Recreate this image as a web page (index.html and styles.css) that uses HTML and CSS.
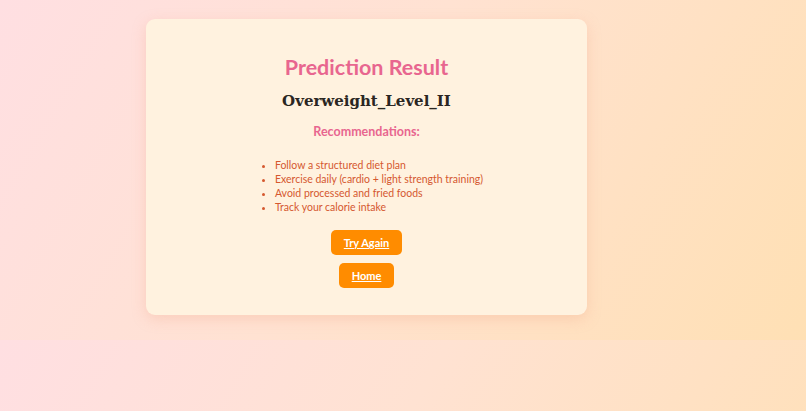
FILE: index.html
```html
<!DOCTYPE html>
<html>
<head>
<meta charset="utf-8">
<link rel="stylesheet" href="styles.css">
</head>
<body>
<div class="card">
  <h1 class="title">Prediction Result</h1>
  <h2 class="result">Overweight_Level_II</h2>
  <h3 class="rec-title">Recommendations:</h3>
  <ul class="rec-list">
    <li>Follow a structured diet plan</li>
    <li>Exercise daily (cardio + light strength training)</li>
    <li>Avoid processed and fried foods</li>
    <li>Track your calorie intake</li>
  </ul>
  <div class="actions">
    <a class="btn" href="#">Try Again</a>
    <a class="btn" href="#">Home</a>
  </div>
</div>
</body>
</html>
```
FILE: styles.css
```css
html {
  margin: 0;
  background: linear-gradient(120deg, #ffdfe2 0%, #ffe2d2 45%, #ffe0b4 100%);
  background-size: 100% 340px;
  background-repeat: repeat-y;
}
body {
  margin: 0;
  padding: 19px 0 26px 146px;
  font-family: Lato, "Noto Sans", sans-serif;
}
.card {
  width: 441px;
  box-sizing: border-box;
  background: #fff2df;
  border-radius: 9px;
  box-shadow: 0 4px 14px rgba(240, 170, 140, 0.35);
  padding: 33px 20px 27px;
  text-align: center;
}
.title {
  margin: 0;
  font-size: 21.5px;
  line-height: 30px;
  font-weight: 700;
  color: #e8668f;
}
.result {
  margin: 7px 0 0;
  font-family: "DejaVu Serif", Georgia, serif;
  font-size: 15px;
  line-height: 24px;
  font-weight: 700;
  color: #2a2622;
}
.rec-title {
  margin: 10px 0 0;
  font-size: 12.5px;
  line-height: 18px;
  font-weight: 700;
  color: #e8668f;
}
.rec-list {
  display: inline-block;
  text-align: left;
  margin: 17px 0 0;
  padding-left: 25px;
  font-size: 10.5px;
  line-height: 14px;
  color: #d5582f;
}
.actions {
  display: flex;
  flex-direction: column;
  align-items: center;
  gap: 8px;
  margin-top: 16px;
}
.btn {
  display: inline-block;
  background: #ff8c00;
  color: #fff;
  font-size: 11px;
  font-weight: 700;
  line-height: 25px;
  padding: 0 13px;
  border-radius: 5px;
  text-decoration: underline;
}
```
